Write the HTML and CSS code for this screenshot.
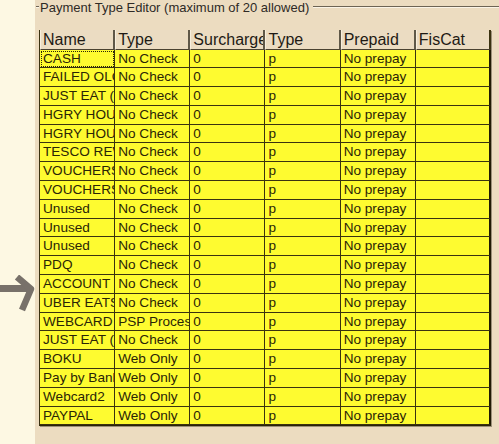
FILE: index.html
```html
<!DOCTYPE html>
<html>
<head>
<meta charset="utf-8">
<link rel="stylesheet" href="styles.css">
</head>
<body>
<div class="side">
  <svg class="arrow" width="35" height="40" viewBox="0 0 35 40">
    <path d="M0 13.5 H29" stroke="#78716a" stroke-width="7" fill="none"/>
    <path d="M17 2 L31 14 L22 35" stroke="#78716a" stroke-width="6.5" fill="none" stroke-linejoin="round"/>
  </svg>
</div>
<div class="panel">
  <div class="legend-row">
    <span class="dash"></span>
    <span class="legend">Payment Type Editor (maximum of 20 allowed)</span>
    <span class="rule"></span>
  </div>
  <div class="grid">
    <div class="hd">Name</div><div class="hd">Type</div><div class="hd">Surcharge</div><div class="hd">Type</div><div class="hd">Prepaid</div><div class="hd">FisCat</div>

    <div class="c focus">CASH</div><div class="c">No Check</div><div class="c">0</div><div class="c">p</div><div class="c">No prepay</div><div class="c"></div>
    <div class="c">FAILED OLO</div><div class="c">No Check</div><div class="c">0</div><div class="c">p</div><div class="c">No prepay</div><div class="c"></div>
    <div class="c">JUST EAT (CARD)</div><div class="c">No Check</div><div class="c">0</div><div class="c">p</div><div class="c">No prepay</div><div class="c"></div>
    <div class="c">HGRY HOUSE</div><div class="c">No Check</div><div class="c">0</div><div class="c">p</div><div class="c">No prepay</div><div class="c"></div>
    <div class="c">HGRY HOUSE</div><div class="c">No Check</div><div class="c">0</div><div class="c">p</div><div class="c">No prepay</div><div class="c"></div>
    <div class="c">TESCO REWARD</div><div class="c">No Check</div><div class="c">0</div><div class="c">p</div><div class="c">No prepay</div><div class="c"></div>
    <div class="c">VOUCHERS</div><div class="c">No Check</div><div class="c">0</div><div class="c">p</div><div class="c">No prepay</div><div class="c"></div>
    <div class="c">VOUCHERS</div><div class="c">No Check</div><div class="c">0</div><div class="c">p</div><div class="c">No prepay</div><div class="c"></div>
    <div class="c">Unused</div><div class="c">No Check</div><div class="c">0</div><div class="c">p</div><div class="c">No prepay</div><div class="c"></div>
    <div class="c">Unused</div><div class="c">No Check</div><div class="c">0</div><div class="c">p</div><div class="c">No prepay</div><div class="c"></div>
    <div class="c">Unused</div><div class="c">No Check</div><div class="c">0</div><div class="c">p</div><div class="c">No prepay</div><div class="c"></div>
    <div class="c">PDQ</div><div class="c">No Check</div><div class="c">0</div><div class="c">p</div><div class="c">No prepay</div><div class="c"></div>
    <div class="c">ACCOUNT</div><div class="c">No Check</div><div class="c">0</div><div class="c">p</div><div class="c">No prepay</div><div class="c"></div>
    <div class="c">UBER EATS</div><div class="c">No Check</div><div class="c">0</div><div class="c">p</div><div class="c">No prepay</div><div class="c"></div>
    <div class="c">WEBCARD</div><div class="c">PSP Process</div><div class="c">0</div><div class="c">p</div><div class="c">No prepay</div><div class="c"></div>
    <div class="c">JUST EAT (CARD)</div><div class="c">No Check</div><div class="c">0</div><div class="c">p</div><div class="c">No prepay</div><div class="c"></div>
    <div class="c">BOKU</div><div class="c">Web Only</div><div class="c">0</div><div class="c">p</div><div class="c">No prepay</div><div class="c"></div>
    <div class="c">Pay by Bank</div><div class="c">Web Only</div><div class="c">0</div><div class="c">p</div><div class="c">No prepay</div><div class="c"></div>
    <div class="c">Webcard2</div><div class="c">Web Only</div><div class="c">0</div><div class="c">p</div><div class="c">No prepay</div><div class="c"></div>
    <div class="c">PAYPAL</div><div class="c">Web Only</div><div class="c">0</div><div class="c">p</div><div class="c">No prepay</div><div class="c"></div>
  </div>
</div>
</body>
</html>
```
FILE: styles.css
```css
html, body {
  margin: 0;
  padding: 0;
}
body {
  display: flex;
  width: 499px;
  height: 444px;
  overflow: hidden;
  font-family: "Liberation Sans", Arial, sans-serif;
}
.side {
  width: 35px;
  flex: none;
  background: #fdf8e3;
  padding-top: 275px;
  box-sizing: border-box;
}
.arrow {
  display: block;
}
.panel {
  flex: 1;
  background: #ecdcc0;
  padding-left: 4px;
}
.legend-row {
  display: flex;
  align-items: flex-start;
  height: 15px;
  margin-left: -3px;
}
.dash {
  width: 3px;
  height: 1px;
  margin-top: 6px;
  background: #6d6455;
  border-bottom: 1px solid #fbf4e6;
}
.legend {
  font-size: 13px;
  line-height: 15px;
  color: #2e2a26;
  padding: 0 4px 0 1px;
  white-space: nowrap;
}
.rule {
  flex: 1;
  height: 1px;
  margin-top: 6px;
  background: #6d6455;
  border-bottom: 1px solid #fbf4e6;
}
.grid {
  margin-top: 15px;
  width: 452px;
  display: grid;
  grid-template-columns: repeat(6, 1fr);
  grid-template-rows: 19.5px;
  grid-auto-rows: 18.8px;
  border-left: 1px solid #3a3210;
  border-bottom: 1px solid #2a2408;
  box-shadow: 1px 1px 0 #9c917a;
  box-sizing: border-box;
}
.hd {
  background: #ebdcc2;
  color: #1e1a14;
  font-size: 16px;
  line-height: 19px;
  padding-left: 2px;
  border-right: 2px solid #5f5848;
  border-left: 1px solid #f7eedc;
  border-bottom: 1px solid #4a4230;
  white-space: nowrap;
  overflow: hidden;
  text-overflow: clip;
}
.c {
  background: #fefb30;
  color: #2a2406;
  font-size: 13.6px;
  line-height: 18px;
  padding-left: 3px;
  border-right: 1px solid #3a3210;
  border-bottom: 1px solid #3a3210;
  white-space: nowrap;
  overflow: hidden;
  text-overflow: clip;
}
.c:nth-child(6n) {
  border-right: 2px solid #201a04;
}
.hd:nth-child(6) {
  border-right: 2px solid #3a3210;
}
.focus {
  outline: 1px dotted #2a2406;
  outline-offset: -2px;
}
```
